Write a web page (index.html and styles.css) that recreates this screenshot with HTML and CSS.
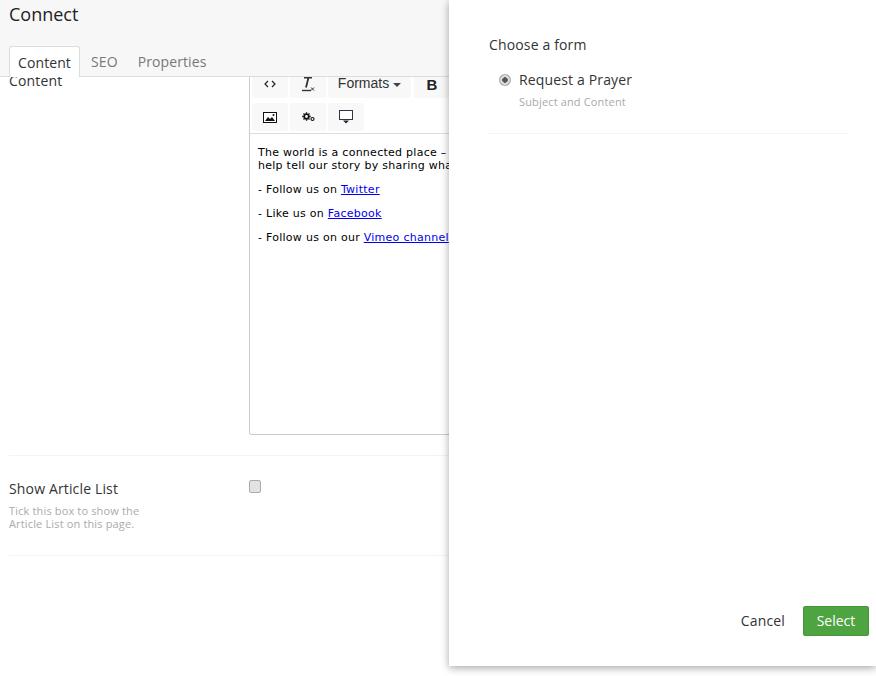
FILE: index.html
```html
<!DOCTYPE html>
<html lang="en">
<head>
<meta charset="utf-8">
<title>Connect</title>
<link rel="stylesheet" href="styles.css">
</head>
<body>
<div class="page">
  <header class="head">
    <h1 class="title">Connect</h1>
    <nav class="tabs">
      <a class="tab active">Content</a>
      <a class="tab">SEO</a>
      <a class="tab">Properties</a>
    </nav>
  </header>
  <main class="body">
    <section class="row row-editor">
      <div class="label-col"><div class="label">Content</div></div>
      <div class="editor">
        <div class="toolbar">
          <div class="tool-row first">
            <button class="tool"><svg width="12" height="10" viewBox="0 0 12 10"><path d="M4 2 1 5l3 3M8 2l3 3-3 3" fill="none" stroke="#222" stroke-width="1.2"/></svg></button>
            <button class="tool"><svg width="14" height="16" viewBox="0 0 14 16"><path d="M3 1.5h8M7.500 1.500 5 11.500" fill="none" stroke="#333" stroke-width="1.8"/><path d="M1 14.500h9" stroke="#333" stroke-width="1.400"/><path d="M10 11.500l3 3M13 11.500l-3 3" stroke="#333" stroke-width="1"/></svg></button>
            <button class="tool tool-wide">Formats<span class="caret"></span></button>
            <button class="tool tool-b">B</button>
          </div>
          <div class="tool-row">
            <button class="tool"><svg width="14" height="11" viewBox="0 0 14 11"><rect x=".5" y=".5" width="13" height="10" fill="#fff" stroke="#111"/><path d="M2 9l3-4 2 2 2-2 3 4z" fill="#111"/><circle cx="10.5" cy="3" r="1" fill="#111"/></svg></button>
            <button class="tool"><svg width="13" height="10" viewBox="0 0 13 10"><path d="M4.500 .3v1.500M4.500 7.200v1.500M.3 4.500h1.500M7.200 4.500h1.500M1.500 1.500l1 1M6.500 6.500l1 1M7.500 1.500l-1 1M2.500 6.500l-1 1" stroke="#111" stroke-width="1.300"/><circle cx="4.500" cy="4.500" r="2.300" fill="none" stroke="#111" stroke-width="1.700"/><circle cx="10.500" cy="7" r="1.500" fill="none" stroke="#111" stroke-width="1.100"/></svg></button>
            <button class="tool"><svg width="14" height="14" viewBox="0 0 14 14"><rect x=".5" y=".5" width="13" height="9" fill="#fff" stroke="#334"/><path d="M4 10.500h6L7 13.500z" fill="#222"/></svg></button>
          </div>
        </div>
        <div class="editor-text">
          <p>The world is a connected place –<br>help tell our story by sharing what</p>
          <p>- Follow us on <a href="#">Twitter</a></p>
          <p>- Like us on <a href="#">Facebook</a></p>
          <p>- Follow us on our <a href="#">Vimeo channel</a></p>
        </div>
      </div>
    </section>
    <section class="row row-check">
      <div class="label-col">
        <div class="label">Show Article List</div>
        <div class="help">Tick this box to show the<br>Article List on this page.</div>
      </div>
      <div class="check"></div>
    </section>
  </main>
</div>
<aside class="drawer">
  <div class="drawer-main">
    <h2 class="drawer-title">Choose a form</h2>
    <div class="option">
      <span class="radio"></span>
      <div>
        <div class="option-name">Request a Prayer</div>
        <div class="option-sub">Subject and Content</div>
      </div>
    </div>
  </div>
  <div class="drawer-foot">
    <a class="cancel">Cancel</a>
    <button class="select">Select</button>
  </div>
</aside>
</body>
</html>
```
FILE: styles.css
```css
* { box-sizing: border-box; }
html, body { margin: 0; height: 676px; overflow: hidden; background: #fff; }
body { font-family: "Open Sans", sans-serif; font-size: 14px; color: #333; position: relative; letter-spacing: .15px; }

.page { width: 876px; height: 676px; overflow: hidden; }

.head { height: 77px; background: #f7f7f7; border-bottom: 1px solid #ddd; padding: 4px 9px 0; position: relative; z-index: 1; }
.title { margin: 0; height: 42px; font-size: 18px; font-weight: 400; line-height: 20px; color: #222; letter-spacing: 0; }
.tabs { display: flex; }
.tab { height: 31px; padding: 6px 8px; line-height: 19px; color: #777; margin-right: 2px; letter-spacing: .1px; }
.tab.active { background: #fff; color: #333; border: 1px solid #ddd; border-bottom: 0; border-radius: 3px 3px 0 0; padding: 6px 8px 0; width: 71px; }
.tab + .tab { padding-left: 9px; padding-right: 9px; }

.body { padding: 0 0 0 9px; }
.row { display: flex; border-bottom: 1px solid #f3f3f3; }
.label-col { width: 240px; flex: none; }
.label { line-height: 19px; }
.row-editor { height: 386px; margin-top: -7px; }
.row-editor .label { margin-top: 1px; }
.editor { width: 627px; height: 366px; border: 1px solid #ccc; border-radius: 2px; margin-top: -1px; flex: none; }
.toolbar { height: 64px; border-bottom: 1px solid #ddd; padding: 0 2px; }
.tool-row { display: flex; gap: 2px; height: 28px; }
.tool-row.first { margin-bottom: 5px; }
.tool { width: 36px; height: 28px; border: 0; padding: 0; background: #f8f8f8; border-radius: 3px; display: flex; align-items: center; justify-content: center; font-family: "Liberation Sans", sans-serif; font-size: 14px; color: #333; }
.tool-wide { width: 83px; margin-right: 1px; padding-bottom: 2px; }
.tool-b { font-weight: 700; font-size: 15px; color: #222; }
.caret { display: inline-block; margin-left: 4px; margin-top: 3px; border: 4px solid transparent; border-top-color: #444; border-bottom: 0; }

.editor-text { padding: 12px 8px; font-family: "DejaVu Sans", sans-serif; font-size: 11px; line-height: 13px; color: #000; white-space: nowrap; letter-spacing: .27px; }
.editor-text p { margin: 0 0 11px; }
.editor-text a { color: #00e; text-decoration: underline; }

.row-check { height: 100px; padding-top: 23px; }
.help { margin-top: 6px; font-size: 11px; line-height: 13px; color: #aaa; }
.check { width: 12px; height: 13px; margin-top: 1px; border: 1px solid #aaa; border-radius: 2px; background: #e2e2e2; }

.drawer { position: absolute; left: 449px; top: 0; width: 427px; height: 666px; background: #fff; box-shadow: 0 2px 8px rgba(0,0,0,.35); z-index: 2; display: flex; flex-direction: column; padding: 0 7px 30px 40px; justify-content: space-between; }
.drawer-main { width: 360px; margin-top: 35px; padding-bottom: 20px; border-bottom: 1px solid #f3f3f3; height: 99px; }
.drawer-title { margin: 0 0 16px; font-size: 14px; font-weight: 400; line-height: 19px; color: #333; }
.option { display: flex; padding-left: 10px; gap: 8px; }
.radio { width: 12px; height: 12px; margin-top: 4px; flex: none; border-radius: 50%; background: radial-gradient(circle, #555 0 2.500px, #ddd 3px 4.500px, #aaa 5px 6px); }
.option-name { line-height: 19px; }
.option-sub { margin-top: 5px; font-size: 11px; line-height: 15px; color: #aaa; }

.drawer-foot { display: flex; justify-content: flex-end; align-items: center; gap: 18px; }
.cancel { color: #333; padding-bottom: 2px; }
.select { width: 66px; height: 30px; background: #4ea440; color: #fff; border: 1px solid #459639; border-radius: 2px; font-family: "Open Sans", sans-serif; font-size: 14px; padding: 0 0 2px; }
```
